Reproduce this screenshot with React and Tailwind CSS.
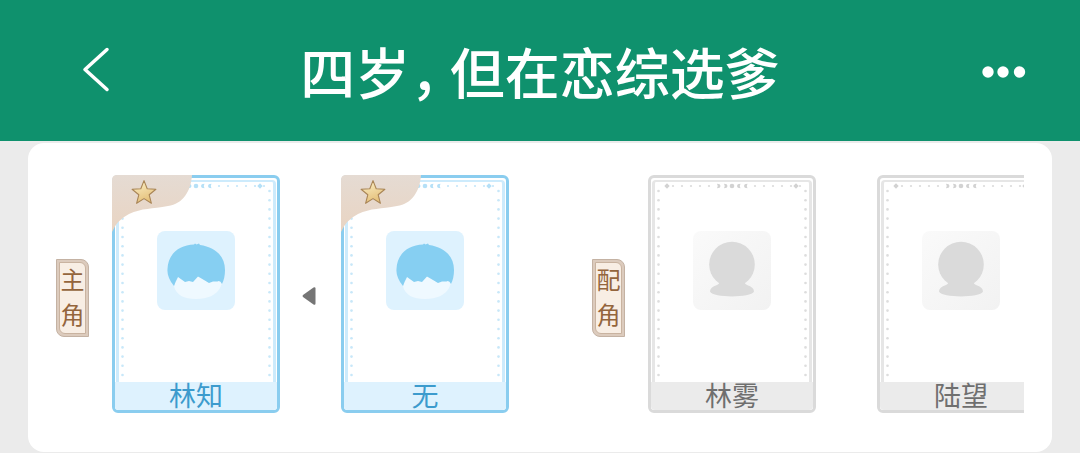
import React from 'react';
import clsx from 'clsx';

const leads = ['林知', '无'];
const supports = ['林雾', '陆望'];

const sideDots = Array.from({ length: 21 }, (_, i) => 16 + i * 9.2);
const topDots = [25, 34, 43, 52, 61, 107, 116, 125, 134, 143, 152];

function FrameDots({ className }) {
    return (
        <svg viewBox="0 0 168 238" fill="currentColor" aria-hidden="true"
            className={clsx('absolute -left-[3px] -top-[3px] w-[168px] h-[238px]', className)}>
            {sideDots.map((y) => (
                <g key={y} opacity="0.75">
                    <circle cx="10.5" cy={y} r="1.3" />
                    <circle cx="157.5" cy={y} r="1.3" />
                </g>
            ))}
            {topDots.map((x) => <circle key={x} cx={x} cy="11" r="1.1" opacity="0.8" />)}
            <path d="M19 8.3l2.7 2.7-2.7 2.7-2.7-2.7zM148 8.3l2.7 2.7-2.7 2.7-2.7-2.7z" />
            <circle cx="84" cy="11" r="2.3" />
            <path d="M69 8.8q3.4 0 3.4 2.2t-3.4 2.2q1.5-2.2 0-4.4zM76 8.8q3.4 0 3.4 2.2t-3.4 2.2q1.5-2.2 0-4.4z" />
            <path d="M92.5 8.8q-3.4 0-3.4 2.2t3.4 2.2q-1.5-2.2 0-4.4zM99.5 8.8q-3.4 0-3.4 2.2t3.4 2.2q-1.5-2.2 0-4.4z" />
        </svg>
    );
}

function StarCorner() {
    return (
        <svg viewBox="0 0 80 57" aria-hidden="true" className="absolute -left-[3px] -top-[3px] w-20 h-[57px]">
            <defs>
                <linearGradient id="corner" x1="0" y1="0" x2="0" y2="1">
                    <stop offset="0" stopColor="#e5dbd3" />
                    <stop offset="1" stopColor="#e9d4c2" />
                </linearGradient>
                <linearGradient id="gold" x1="0" y1="0" x2="0.4" y2="1">
                    <stop offset="0" stopColor="#fdf3cc" />
                    <stop offset="1" stopColor="#e5c07a" />
                </linearGradient>
            </defs>
            <path d="M0 5Q0 0 5 0H80C79 16 71 29 56 31C40 34 30 33 17 39Q5 45 0 57Z" fill="url(#corner)" />
            <path d="M32 5.6l3.2 8.2 8.7.5-6.7 5.5 2.2 8.5-7.4-4.7-7.4 4.7 2.2-8.5-6.7-5.5 8.7-.5z"
                fill="url(#gold)" stroke="#a98556" strokeWidth="1.1" strokeLinejoin="round" />
        </svg>
    );
}

function LeadAvatar() {
    return (
        <svg viewBox="0 0 78 79" aria-hidden="true" className="w-[78px] h-[79px]">
            <rect width="78" height="79" rx="8" fill="#def2fe" />
            <path d="M17 55L21 46L64 46Q66 52 63 57C59 64 51 68 39 68S19 64 17 55Z" fill="#eff9ff" />
            <path d="M17 55C12 49 10 43 10.5 38C11 23 22 14 37 13.5L38 12.5L39.5 13.5L42 12.5L43 14C58 16 68 25 68 39Q68 47 65 53Q63 49 60.5 50.5L56 50.5L52 52L47 49L41 45.5L36 51L32 50L28 51L21 46L18.5 51Z" fill="#86cff2" />
        </svg>
    );
}

function SupportAvatar() {
    return (
        <svg viewBox="0 0 78 79" aria-hidden="true" className="w-[78px] h-[79px]">
            <defs>
                <linearGradient id="plate" x1="0" y1="0" x2="1" y2="1">
                    <stop offset="0" stopColor="#fafafa" />
                    <stop offset="1" stopColor="#f2f2f2" />
                </linearGradient>
            </defs>
            <rect width="78" height="79" rx="8" fill="url(#plate)" />
            <circle cx="39" cy="33.5" r="22.8" fill="#dadada" />
            <path d="M25 50H53Q50 52 54 54Q61 56 61 60.500C58 67 20 67 17 60.500Q17 56 24 54Q28 52 25 50Z" fill="#dadada" />
        </svg>
    );
}

function RoleCard({ name, lead }) {
    return (
        <article className={clsx('relative shrink-0 w-[168px] h-[238px] flex flex-col rounded-md border-[3px] bg-white',
            lead ? 'border-[#8acdef]' : 'border-[#dadada]')}>
            <div className="flex-1 px-px pt-[2px]">
                <div className={clsx('h-full flex justify-center rounded-t border-x-[3px] border-t-2 pt-[49px]',
                    lead ? 'border-[#cdebfc]' : 'border-[#e6e6e6]')}>
                    {lead ? <LeadAvatar /> : <SupportAvatar />}
                </div>
            </div>
            <h2 className={clsx('h-7 rounded-b-sm text-center text-[27px] leading-[26px]',
                lead ? 'bg-[#def2fe] text-[#3c9bcd]' : 'bg-[#ebebeb] text-[#6f6f6f]')}>
                {name}
            </h2>
            <FrameDots className={lead ? 'text-[#b5e0f7]' : 'text-[#d2d2d2]'} />
            {lead && <StarCorner />}
        </article>
    );
}

function RoleGroup({ label, names, lead }) {
    return (
        <section className="flex shrink-0 items-center">
            <div className="pt-2 mr-[23px]">
                <div className="w-[33px] rounded-tr-lg rounded-bl-lg border border-[#c4b2a3] bg-[#dccbbd] p-[2px]">
                    <div className="flex flex-col items-center rounded-tr-md rounded-bl-md border border-[#c9b3a0] bg-[#f8eee4] text-2xl text-[#94653c]">
                        {[...label].map((ch) => <span key={ch} className="h-[35px] leading-8">{ch}</span>)}
                    </div>
                </div>
            </div>
            {names.map((name, i) => (
                <React.Fragment key={name}>
                    {i > 0 && (
                        <div className="w-[61px] pt-1 flex justify-center">
                            {lead && (
                                <svg viewBox="0 0 14 20" aria-hidden="true" className="w-3.5 h-5 mr-1">
                                    <path d="M1 9Q0 10 1 11L11.5 18.5Q13.5 19.5 13.5 17.5V2.5Q13.5 .5 11.5 1.5Z" fill="#757575" />
                                </svg>
                            )}
                        </div>
                    )}
                    <RoleCard name={name} lead={lead} />
                </React.Fragment>
            ))}
        </section>
    );
}

export default function App() {
    return (
        <div className="min-h-screen bg-[#ebebeb] font-['Noto_Sans_CJK_SC',sans-serif]">
            <header className="h-[141px] grid grid-cols-[1fr_auto_1fr] items-center bg-[#0f916d] text-white">
                <button type="button" aria-label="返回" className="justify-self-start ml-20">
                    <svg viewBox="0 0 32 48" fill="none" stroke="currentColor" strokeWidth="3.5" strokeLinecap="round" strokeLinejoin="round" className="w-8 h-12">
                        <path d="M27 2.5L5 22.5L27 42.5" />
                    </svg>
                </button>
                <h1 className="text-[55px] leading-none font-medium">
                    四岁<span className="inline-block pr-3 [font-feature-settings:'halt']">，</span>但在恋综选爹
                </h1>
                <button type="button" aria-label="更多" className="justify-self-end mr-[54px]">
                    <svg viewBox="0 0 44 14" fill="currentColor" className="w-11 h-3.5">
                        <circle cx="6" cy="8" r="5.7" />
                        <circle cx="21" cy="8" r="5.7" />
                        <circle cx="37.5" cy="8" r="5.7" />
                    </svg>
                </button>
            </header>

            <div className="pt-[2px]">
                <main className="mx-7 rounded-2xl bg-white px-7 pt-8">
                    <div className="flex gap-[83px] overflow-hidden pb-[39px]">
                        <RoleGroup label="主角" names={leads} lead />
                        <RoleGroup label="配角" names={supports} />
                    </div>
                </main>
            </div>
        </div>
    );
}
